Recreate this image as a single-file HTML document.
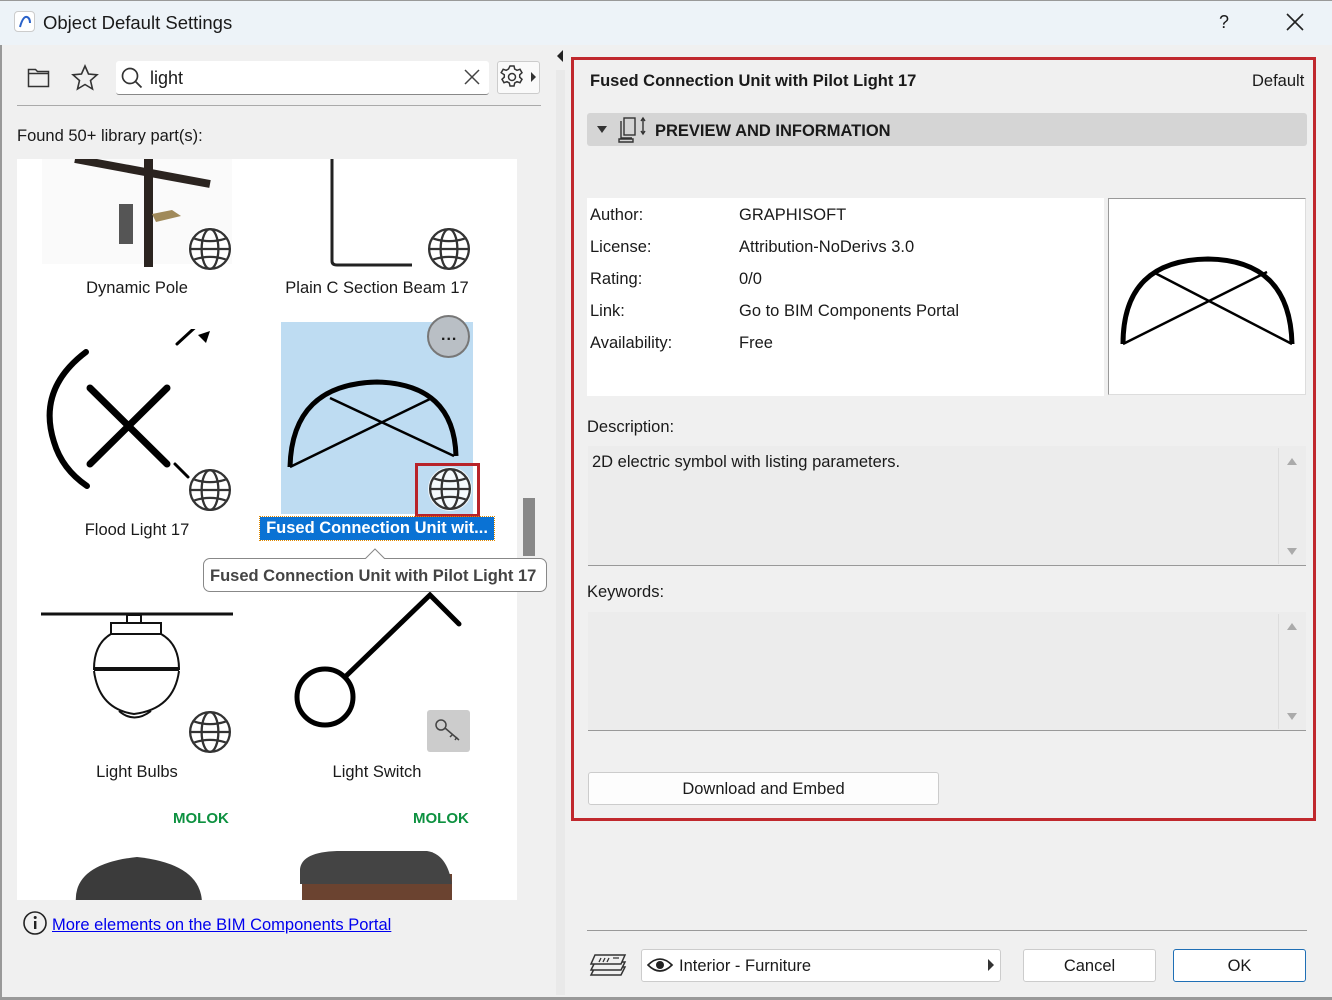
<!DOCTYPE html>
<html><head><meta charset="utf-8"><style>
*{margin:0;padding:0;box-sizing:border-box}
body{width:1332px;height:1000px;background:#f0f0f0;font-family:"Liberation Sans",sans-serif;font-size:16px;color:#1a1a1a;position:relative;overflow:hidden}
.a{position:absolute;white-space:nowrap}
.lbl{position:absolute;text-align:center;width:240px;font-size:16.5px}
</style></head><body>
<svg width="0" height="0" style="position:absolute"><defs>
<symbol id="g" viewBox="0 0 44 44"><circle cx="22" cy="22" r="21" fill="#fff" opacity=".85"/><g fill="none" stroke="#333" stroke-width="2.2"><circle cx="22" cy="22" r="19"/><ellipse cx="22" cy="22" rx="8" ry="19"/><line x1="3" y1="22" x2="41" y2="22"/><path d="M7 12Q22 17 37 12M7 32Q22 27 37 32"/></g></symbol>
</defs></svg>

<div class="a" style="left:0;top:0;width:1332px;height:45px;background:#edf3f8;border-top:1px solid #999"></div>
<div class="a" style="left:14px;top:11px;width:21px;height:21px;border:1px solid #ccc;border-radius:4px;background:#fff"></div>
<svg class="a" style="left:16px;top:13px" width="18" height="18"><path d="M4 14Q7 3 11 4Q14 5 14 10" fill="none" stroke="#2a62c9" stroke-width="2"/></svg>
<div class="a" style="left:43px;top:12px;font-size:18.5px">Object Default Settings</div>
<div class="a" style="left:1219px;top:12px;font-size:18px">?</div>
<svg class="a" style="left:1286px;top:13px" width="18" height="18"><path d="M1 1L17 17M17 1L1 17" stroke="#222" stroke-width="1.6"/></svg>
<div class="a" style="left:0;top:45px;width:2px;height:955px;background:#999"></div>

<svg class="a" style="left:27px;top:66px" width="24" height="22"><path d="M1.5 3.5h7l2 2h11v15h-20z M1.5 7.5h20" fill="none" stroke="#333" stroke-width="1.5"/></svg>
<svg class="a" style="left:71px;top:64px" width="28" height="27"><path d="M14 2l3.5 8 8.5.8-6.5 5.7 2 8.5-7.5-4.5-7.5 4.5 2-8.5-6.5-5.7 8.5-.8z" fill="none" stroke="#333" stroke-width="1.6"/></svg>
<div class="a" style="left:116px;top:61px;width:373px;height:34px;background:#fff;border-bottom:1px solid #888;border-radius:3px"></div>
<svg class="a" style="left:120px;top:66px" width="24" height="24"><circle cx="10" cy="10" r="7.5" fill="none" stroke="#333" stroke-width="1.7"/><path d="M15.5 15.5l6 6" stroke="#333" stroke-width="1.8"/></svg>
<div class="a" style="left:150px;top:68px;font-size:18px">light</div>
<svg class="a" style="left:464px;top:69px" width="16" height="16"><path d="M1 1L15 15M15 1L1 15" stroke="#444" stroke-width="1.5"/></svg>
<div class="a" style="left:497px;top:61px;width:43px;height:33px;background:#fafafa;border:1px solid #ccc;border-radius:3px"></div>
<svg class="a" style="left:499px;top:64px" width="26" height="26"><g fill="none" stroke="#333" stroke-width="1.5"><circle cx="13" cy="13" r="3.5"/><path d="M11 2h4l.7 3 2.3 1.3 3-1 2 3.4-2.3 2.1v2.4l2.3 2.1-2 3.4-3-1-2.3 1.3-.7 3h-4l-.7-3-2.3-1.3-3 1-2-3.4 2.3-2.1v-2.4L2.2 8.7l2-3.4 3 1L9.5 5z"/></g></svg>
<div class="a" style="left:531px;top:72px;width:0;height:0;border-left:5px solid #333;border-top:5px solid transparent;border-bottom:5px solid transparent"></div>
<div class="a" style="left:17px;top:105px;width:524px;height:1px;background:#aaa"></div>
<div class="a" style="left:17px;top:127px;font-size:16.5px">Found 50+ library part(s):</div>

<div class="a" style="left:17px;top:159px;width:500px;height:741px;background:#fff;overflow:hidden">
 <svg class="a" style="left:25px;top:0" width="190" height="110"><rect x="0" y="0" width="190" height="105" fill="#fafafa"/><path d="M33 0L168 25" stroke="#2b2420" stroke-width="8"/><rect x="102" y="0" width="9" height="108" fill="#2b2420"/><rect x="77" y="45" width="14" height="40" fill="#555"/><path d="M110 55l20-4 9 6-25 6z" fill="#a08a5a"/></svg>
 <svg class="a" style="left:170px;top:67px" width="46" height="46"><use href="#g"/></svg>
 <svg class="a" style="left:300px;top:0" width="120" height="110"><path d="M15 0V102Q15 106 20 106H95" fill="none" stroke="#222" stroke-width="3"/></svg>
 <svg class="a" style="left:409px;top:67px" width="46" height="46"><use href="#g"/></svg>
 <div class="lbl" style="left:0;top:120px">Dynamic Pole</div>
 <div class="lbl" style="left:240px;top:120px">Plain C Section Beam 17</div>
 <svg class="a" style="left:25px;top:170px" width="180" height="170"><g stroke="#000" fill="none" stroke-linecap="round"><path d="M44 23Q-5 60 12 113Q20 140 45 157" stroke-width="6"/><path d="M48 59L125 135M125 59L48 135" stroke-width="7"/><path d="M135 15L160 -8" stroke-width="3"/><path d="M133 135L146 148" stroke-width="3"/></g><path d="M168 2l-4 12-8-8z" fill="#000"/></svg>
 <svg class="a" style="left:170px;top:308px" width="46" height="46"><use href="#g"/></svg>
 <div class="lbl" style="left:0;top:362px">Flood Light 17</div>
 <div class="a" style="left:264px;top:163px;width:192px;height:192px;background:#bedcf2"></div>
 <svg class="a" style="left:265px;top:215px" width="190" height="110"><g fill="none" stroke="#000"><path d="M8 93Q10 10 95 8Q172 10 174 82" stroke-width="5"/><path d="M8 93L150 24M48 24L172 82" stroke-width="2.5"/></g></svg>
 <div class="a" style="left:410px;top:156px;width:43px;height:43px;border-radius:50%;background:#b9bfc5;border:2px solid #777"></div>
 <div class="a" style="left:424px;top:168px;font-size:16px;font-weight:bold;letter-spacing:1px">...</div>
 <svg class="a" style="left:410px;top:307px" width="46" height="46"><use href="#g"/></svg>
 <div class="a" style="left:398px;top:304px;width:65px;height:54px;border:3px solid #b8232a"></div>
 <div class="a" style="left:243px;top:358px;width:234px;height:23px;background:#0a72d4;outline:1px dotted #e08a00;color:#fff;font-weight:bold;font-size:16.5px;text-align:center;line-height:23px">Fused Connection Unit wit...</div>
 <svg class="a" style="left:22px;top:440px" width="195" height="130"><g fill="none" stroke="#111" stroke-width="2"><path d="M2 15H194" stroke-width="3"/><rect x="88" y="16" width="14" height="8"/><rect x="72" y="24" width="50" height="11"/><path d="M72 35Q55 45 55 70H140Q140 45 122 35"/><path d="M55 70H140" stroke-width="4"/><path d="M55 72Q60 110 95 115Q135 110 140 72"/><path d="M80 112Q95 125 112 112"/></g></svg>
 <svg class="a" style="left:170px;top:550px" width="46" height="46"><use href="#g"/></svg>
 <svg class="a" style="left:270px;top:430px" width="180" height="150"><g fill="none" stroke="#000" stroke-width="5" stroke-linecap="round"><circle cx="38" cy="108" r="28"/><path d="M58 88L143 6L172 35"/></g></svg>
 <div class="a" style="left:410px;top:551px;width:43px;height:42px;background:#ccc;border-radius:3px"></div>
 <svg class="a" style="left:416px;top:557px" width="32" height="30"><g fill="none" stroke="#444" stroke-width="1.5"><circle cx="8" cy="9" r="5"/><path d="M12 12L26 24M20 18l-3 3M24 21l-2 3"/></g></svg>
 <div class="lbl" style="left:0;top:604px">Light Bulbs</div>
 <div class="lbl" style="left:240px;top:604px">Light Switch</div>
 <div class="a" style="left:156px;top:651px;font-weight:bold;color:#0d9140;font-size:15px">MOLOK</div>
 <div class="a" style="left:396px;top:651px;font-weight:bold;color:#0d9140;font-size:15px">MOLOK</div>
 <svg class="a" style="left:55px;top:685px" width="135" height="60"><path d="M4 60Q0 20 65 13Q130 20 130 60z" fill="#3b3b3b"/></svg>
 <svg class="a" style="left:280px;top:685px" width="165" height="60"><rect x="5" y="30" width="150" height="30" fill="#6b4330"/><path d="M3 25Q5 8 40 7H130Q150 10 155 40H3z" fill="#444"/></svg>
</div>
<div class="a" style="left:203px;top:558px;width:344px;height:34px;background:#fff;border:1px solid #888;border-radius:7px;color:#444;font-weight:bold;font-size:16.5px;line-height:34px;padding-left:6px">Fused Connection Unit with Pilot Light 17</div>
<svg class="a" style="left:365px;top:548px" width="20" height="11"><path d="M0 11L10 1L20 11" fill="#fff" stroke="#888"/></svg>
<div class="a" style="left:523px;top:498px;width:12px;height:58px;background:#888"></div>

<svg class="a" style="left:22px;top:910px" width="26" height="26"><circle cx="13" cy="13" r="11" fill="none" stroke="#222" stroke-width="1.6"/><rect x="12" y="11" width="2.4" height="8" fill="#222"/><circle cx="13.2" cy="7.5" r="1.5" fill="#222"/></svg>
<div class="a" style="left:52px;top:916px;color:#0000ee;text-decoration:underline;font-size:16.5px">More elements on the BIM Components Portal</div>

<div class="a" style="left:557px;top:50px;width:0;height:0;border-right:6px solid #222;border-top:6px solid transparent;border-bottom:6px solid transparent"></div>
<div class="a" style="left:556px;top:70px;width:9px;height:925px;background:#e9e9e9"></div>

<div class="a" style="left:571px;top:57px;width:745px;height:764px;border:3px solid #c0282d"></div>
<div class="a" style="left:590px;top:72px;font-weight:bold;font-size:16.5px">Fused Connection Unit with Pilot Light 17</div>
<div class="a" style="left:1252px;top:72px;font-size:16.5px">Default</div>
<div class="a" style="left:587px;top:113px;width:720px;height:33px;background:#d5d5d5;border-radius:3px"></div>
<div class="a" style="left:597px;top:126px;border-top:7px solid #333;border-left:5px solid transparent;border-right:5px solid transparent"></div>
<svg class="a" style="left:617px;top:116px" width="34" height="28"><g fill="none" stroke="#333" stroke-width="1.4"><rect x="7" y="2" width="11" height="17"/><path d="M4 5v17h11M2 23h14v3H2z M26 3v14M24 5l2-3 2 3M24 15l2 3 2-3"/></g></svg>
<div class="a" style="left:655px;top:122px;font-weight:bold;font-size:16.5px">PREVIEW AND INFORMATION</div>

<div class="a" style="left:587px;top:198px;width:517px;height:198px;background:#fff"></div>
<div class="a" style="left:1108px;top:198px;width:198px;height:197px;background:#fff;border:1px solid #999;border-right-color:#ddd;border-bottom-color:#ddd"></div>
<svg class="a" style="left:1110px;top:250px" width="195" height="110"><g fill="none" stroke="#000"><path d="M13 94Q13 10 98 9Q180 10 182 94" stroke-width="5"/><path d="M13 94L157 22M43 22L182 94" stroke-width="2.5"/></g></svg>
<div class="a" style="left:590px;top:199px;line-height:32px;font-size:16.5px">Author:<br>License:<br>Rating:<br>Link:<br>Availability:</div>
<div class="a" style="left:739px;top:199px;line-height:32px;font-size:16.5px">GRAPHISOFT<br>Attribution-NoDerivs 3.0<br>0/0<br>Go to BIM Components Portal<br>Free</div>

<div class="a" style="left:587px;top:418px;font-size:16.5px">Description:</div>
<div class="a" style="left:588px;top:446px;width:718px;height:120px;background:#ececec;border-bottom:1px solid #999"></div>
<div class="a" style="left:592px;top:453px;font-size:16.5px">2D electric symbol with listing parameters.</div>
<div class="a" style="left:1278px;top:448px;width:1px;height:116px;background:#ddd"></div>
<div class="a" style="left:1287px;top:458px;border-bottom:7px solid #aaa;border-left:5px solid transparent;border-right:5px solid transparent"></div>
<div class="a" style="left:1287px;top:548px;border-top:7px solid #aaa;border-left:5px solid transparent;border-right:5px solid transparent"></div>

<div class="a" style="left:587px;top:583px;font-size:16.5px">Keywords:</div>
<div class="a" style="left:588px;top:612px;width:718px;height:119px;background:#ececec;border-bottom:1px solid #999"></div>
<div class="a" style="left:1278px;top:614px;width:1px;height:115px;background:#ddd"></div>
<div class="a" style="left:1287px;top:623px;border-bottom:7px solid #aaa;border-left:5px solid transparent;border-right:5px solid transparent"></div>
<div class="a" style="left:1287px;top:713px;border-top:7px solid #aaa;border-left:5px solid transparent;border-right:5px solid transparent"></div>

<div class="a" style="left:588px;top:772px;width:351px;height:33px;background:#fdfdfd;border:1px solid #ccc;border-radius:3px;text-align:center;line-height:33px;font-size:16.5px">Download and Embed</div>

<div class="a" style="left:587px;top:930px;width:720px;height:1px;background:#999"></div>
<svg class="a" style="left:589px;top:951px" width="40" height="28"><g fill="#f0f0f0" stroke="#333" stroke-width="1.5"><path d="M6 16h30l-4 8H2z"/><path d="M6 11h30l-4 8H2z"/><path d="M6 4h30l-4 9H2z"/></g><path d="M12 7l-2 4M16 7l-2 4M20 7l-2 4M24 7h6" stroke="#333" stroke-width="1.3"/></svg>
<div class="a" style="left:641px;top:949px;width:360px;height:33px;background:#fff;border:1px solid #ccc;border-radius:3px"></div>
<svg class="a" style="left:647px;top:956px" width="26" height="18"><path d="M1 9Q13 -3 25 9Q13 21 1 9z" fill="none" stroke="#222" stroke-width="1.6"/><circle cx="13" cy="9" r="4" fill="#222"/></svg>
<div class="a" style="left:679px;top:957px;font-size:16.5px">Interior - Furniture</div>
<div class="a" style="left:988px;top:959px;border-left:6px solid #333;border-top:6px solid transparent;border-bottom:6px solid transparent"></div>
<div class="a" style="left:1023px;top:949px;width:133px;height:33px;background:#fff;border:1px solid #ccc;border-radius:3px;text-align:center;line-height:33px;font-size:16.5px">Cancel</div>
<div class="a" style="left:1173px;top:949px;width:133px;height:33px;background:#fff;border:1px solid #1f6fb5;border-radius:3px;text-align:center;line-height:33px;font-size:16.5px">OK</div>
<div class="a" style="left:0;top:997px;width:1332px;height:3px;background:#999"></div>
</body></html>
